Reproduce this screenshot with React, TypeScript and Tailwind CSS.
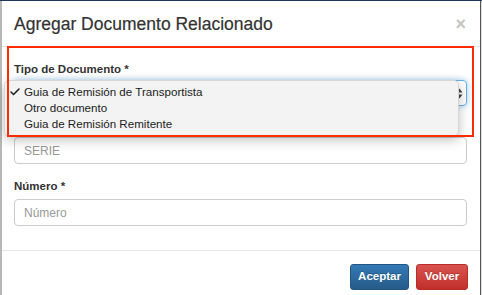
import { Check } from "lucide-react";

const font = { fontFamily: '"Liberation Sans", Arial, sans-serif' };

function SelectArrows() {
  return (
    <svg width="7" height="11" viewBox="0 0 7 11" className="text-[#444]">
      <path d="M3.5 0.5 L6.5 4.5 H0.5 Z" fill="currentColor" />
      <path d="M3.5 10.5 L6.5 6.5 H0.5 Z" fill="currentColor" />
    </svg>
  );
}

export default function App() {
  return (
    <div
      className="relative w-[482px] h-[295px] overflow-hidden bg-[#dcdcdc] text-[#333]"
      style={font}
    >
      <div className="h-px bg-[#1d3b57]" />
      <div className="flex h-[294px]">
        <div className="w-[2px] bg-[#b8b8b8]" />
        <div className="w-[478px] bg-white flex flex-col">
          {/* header */}
          <div className="h-[46px] border-b border-[#e5e5e5] flex items-start justify-between pl-[12px] pr-[14px] pt-[12px]">
            <h4 className="text-[17.5px] leading-[22px] text-[#333] [-webkit-text-stroke:0.2px_#333]">
              Agregar Documento Relacionado
            </h4>
            <span className="text-[18px] font-bold leading-[16px] text-[#c4c4c4] mt-[3px]">×</span>
          </div>

          {/* body */}
          <div className="flex flex-col px-[12px] pt-[14px] pb-[24px]">
            <label className="text-[11.5px] font-bold leading-[16px]">Tipo de Documento *</label>
            <div className="mt-[3px] h-[26px] w-[453px] rounded-[4px] border border-[#66afe9] shadow-[0_0_6px_rgba(102,175,233,0.6)] flex items-center justify-end pr-[3px]">
              <SelectArrows />
            </div>
            <div className="mt-[31px] h-[27px] w-[453px] rounded-[4px] border border-[#ccc] flex items-center px-[9px] text-[12px] text-[#999]">
              SERIE
            </div>
            <label className="mt-[14px] text-[11.5px] font-bold leading-[16px]">Número *</label>
            <div className="mt-[5px] h-[27px] w-[453px] rounded-[4px] border border-[#ccc] flex items-center px-[9px] text-[12px] text-[#999]">
              Número
            </div>
          </div>

          {/* footer */}
          <div className="border-t border-[#e5e5e5] flex justify-end gap-[7px] pt-[13px] pr-[12px]">
            <button className="h-[26px] w-[59px] rounded-[3px] border border-[#245580] bg-gradient-to-b from-[#337ab7] to-[#265a88] text-white text-[11.5px] font-bold [text-shadow:0_-1px_0_rgba(0,0,0,0.2)]">
              Aceptar
            </button>
            <button className="h-[26px] w-[52px] rounded-[3px] border border-[#b92c28] bg-gradient-to-b from-[#d9534f] to-[#c12e2a] text-white text-[11.5px] font-bold [text-shadow:0_-1px_0_rgba(0,0,0,0.2)]">
              Volver
            </button>
          </div>
        </div>
        <div className="w-px bg-[#555]" />
      </div>

      {/* native select popup */}
      <div className="absolute left-[4px] top-[80px] w-[455px] h-[56px] rounded-[5px] bg-[#f3f3f3] border border-[#d6d6d6] shadow-[0_4px_12px_rgba(0,0,0,0.25)] py-[3px] text-[11.6px] text-[#222]">
        <div className="relative h-[16px] leading-[16px] pl-[19px]">
          <Check className="absolute left-[4px] top-[2px] w-[12px] h-[12px]" strokeWidth={3.2} />
          Guia de Remisión de Transportista
        </div>
        <div className="h-[16px] leading-[16px] pl-[19px]">Otro documento</div>
        <div className="h-[16px] leading-[16px] pl-[19px]">Guia de Remisión Remitente</div>
      </div>

      {/* red annotation box */}
      <div className="absolute left-[7px] top-[46px] w-[467px] h-[91px] border-2 border-[#ff2a00] pointer-events-none" />
    </div>
  );
}
